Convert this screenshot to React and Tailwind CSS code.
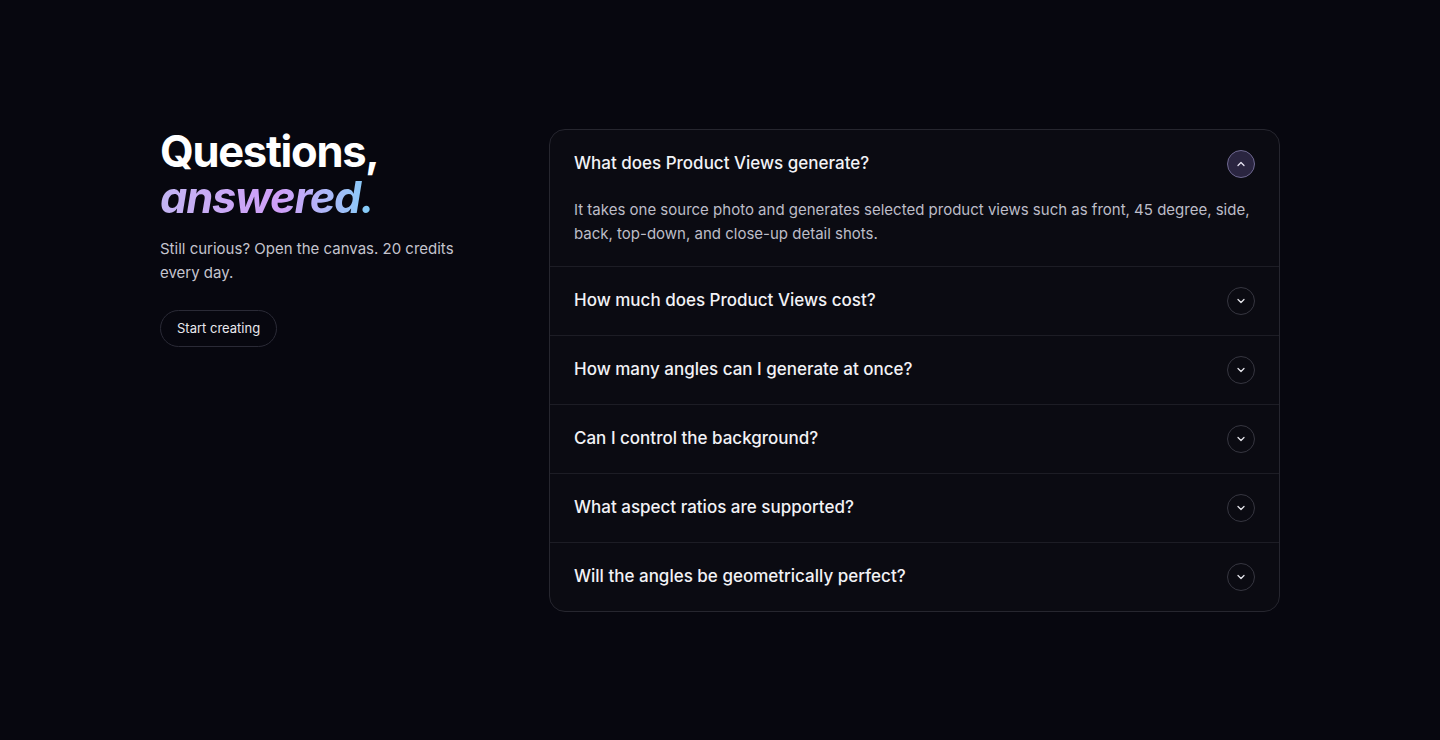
import React, { useState } from "react";

const faqs = [
  {
    q: "What does Product Views generate?",
    a: "It takes one source photo and generates selected product views such as front, 45 degree, side, back, top-down, and close-up detail shots.",
  },
  { q: "How much does Product Views cost?", a: "" },
  { q: "How many angles can I generate at once?", a: "" },
  { q: "Can I control the background?", a: "" },
  { q: "What aspect ratios are supported?", a: "" },
  { q: "Will the angles be geometrically perfect?", a: "" },
];

function Chevron({ up }) {
  return (
    <svg width="12" height="12" viewBox="0 0 24 24" fill="none" stroke="currentColor" strokeWidth="2.5" strokeLinecap="round" strokeLinejoin="round">
      {up ? <path d="M6 15l6-6 6 6" /> : <path d="M6 9l6 6 6-6" />}
    </svg>
  );
}

export default function App() {
  const [open, setOpen] = useState(0);
  return (
    <div className="min-h-[740px] w-full bg-[#07070f] text-white" style={{ fontFamily: "Inter, 'Noto Sans', sans-serif" }}>
      <div className="mx-auto flex w-[1120px] justify-between pt-[129px]">
        <div className="w-[330px]">
          <h2 className="text-[43.5px] font-bold leading-[45px] tracking-[-0.03em]">
            <span className="block">Questions,</span>
            <span className="mt-[1px] block w-fit bg-gradient-to-r from-[#c2b4f2] via-[#cf9ef8] via-55% to-[#78cff8] bg-clip-text pr-1 italic text-transparent">answered.</span>
          </h2>
          <p className="mt-[17px] text-[15px] leading-6 text-[#c4c4ce]">
            Still curious? Open the canvas. 20 credits every day.
          </p>
          <button className="mt-[25px] h-[37px] rounded-full border border-[#2a2a36] px-4 text-[13px] text-[#e8e8ee]">
            Start creating
          </button>
        </div>
        <div className="-ml-[1px] w-[731px] overflow-hidden rounded-2xl border border-[#26262f] bg-[#0b0b12]">
          {faqs.map((f, i) => {
            const isOpen = open === i;
            return (
              <div key={i} className={i > 0 ? "border-t border-[#1d1d25]" : ""}>
                <button
                  onClick={() => setOpen(isOpen ? -1 : i)}
                  className="flex h-[68px] w-full items-center justify-between pl-6 pr-6 text-left"
                >
                  <span className="text-[17px] font-[450] text-[#f2f2f6]">{f.q}</span>
                  {isOpen ? (
                    <span className="flex h-[28px] w-[28px] items-center justify-center rounded-full border border-[#6e6890] bg-[#2a2540] text-[#e8e4f4]">
                      <Chevron up />
                    </span>
                  ) : (
                    <span className="flex h-[28px] w-[28px] items-center justify-center rounded-full border border-[#363640] text-[#e6e6ec]">
                      <Chevron />
                    </span>
                  )}
                </button>
                {isOpen && (
                  <div className="px-6 pb-[20px] text-[15px] leading-6 text-[#bdbdc8]">{f.a}</div>
                )}
              </div>
            );
          })}
        </div>
      </div>
    </div>
  );
}
